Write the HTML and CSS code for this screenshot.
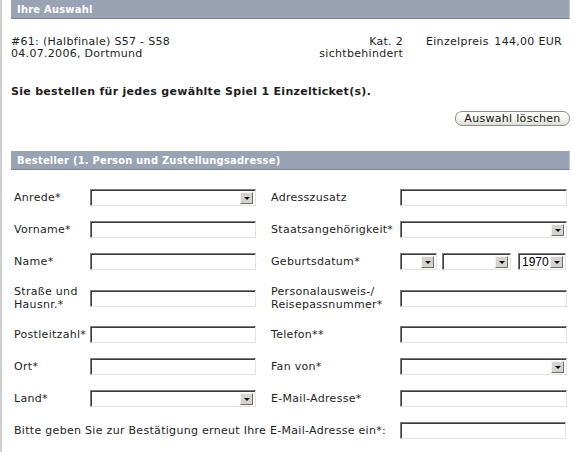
FILE: index.html
```html
<!DOCTYPE html>
<html lang="de">
<head>
<meta charset="utf-8">
<title>Ihre Auswahl</title>
<link rel="stylesheet" href="styles.css">
</head>
<body>
<div class="page">
  <div class="bar">Ihre Auswahl</div>

  <div class="item">
    <div class="match">
      <div>#61: (Halbfinale) S57 - S58</div>
      <div>04.07.2006, Dortmund</div>
    </div>
    <div class="cat">
      <div>Kat. 2</div>
      <div>sichtbehindert</div>
    </div>
    <div class="price">
      <span>Einzelpreis</span>
      <span>144,00 EUR</span>
    </div>
  </div>

  <p class="notice">Sie bestellen für jedes gewählte Spiel 1 Einzelticket(s).</p>

  <div class="actions">
    <button class="btn" type="button">Auswahl löschen</button>
  </div>

  <div class="bar bar-second">Besteller (1. Person und Zustellungsadresse)</div>

  <form class="form">
    <div class="row">
      <label class="lbl">Anrede*</label>
      <div class="select"><span class="value"></span><span class="arrow"></span></div>
      <label class="lbl lbl-right">Adresszusatz</label>
      <input class="field" type="text">
    </div>

    <div class="row">
      <label class="lbl">Vorname*</label>
      <input class="field" type="text">
      <label class="lbl lbl-right">Staatsangehörigkeit*</label>
      <div class="select"><span class="value"></span><span class="arrow"></span></div>
    </div>

    <div class="row">
      <label class="lbl">Name*</label>
      <input class="field" type="text">
      <label class="lbl lbl-right">Geburtsdatum*</label>
      <div class="date">
        <div class="select sel-day"><span class="value"></span><span class="arrow"></span></div>
        <div class="select sel-month"><span class="value"></span><span class="arrow"></span></div>
        <div class="select sel-year"><span class="value">1970</span><span class="arrow"></span></div>
      </div>
    </div>

    <div class="row">
      <label class="lbl">Straße und<br>Hausnr.*</label>
      <input class="field" type="text">
      <label class="lbl lbl-right">Personalausweis-/<br>Reisepassnummer*</label>
      <input class="field" type="text">
    </div>

    <div class="row">
      <label class="lbl">Postleitzahl*</label>
      <input class="field" type="text">
      <label class="lbl lbl-right">Telefon**</label>
      <input class="field" type="text">
    </div>

    <div class="row">
      <label class="lbl">Ort*</label>
      <input class="field" type="text">
      <label class="lbl lbl-right">Fan von*</label>
      <div class="select"><span class="value"></span><span class="arrow"></span></div>
    </div>

    <div class="row">
      <label class="lbl">Land*</label>
      <div class="select"><span class="value"></span><span class="arrow"></span></div>
      <label class="lbl lbl-right">E-Mail-Adresse*</label>
      <input class="field" type="text">
    </div>

    <div class="row row-wide">
      <label class="lbl">Bitte geben Sie zur Bestätigung erneut Ihre E-Mail-Adresse ein*:</label>
      <input class="field" type="text">
    </div>
  </form>
</div>
</body>
</html>
```

FILE: styles.css
```css
html, body {
  margin: 0;
  padding: 0;
  background: #fff;
}

body {
  font-family: "DejaVu Sans", Verdana, sans-serif;
  font-size: 11px;
  letter-spacing: 0.3px;
  color: #1e1e1e;
}

.page {
  border-left: 2px solid #cfcfcf;
  padding-left: 9px;
  width: 559px;
  min-height: 452px;
  box-sizing: content-box;
}

/* section header bars */
.bar {
  height: 19px;
  line-height: 19px;
  background: #99a3b4;
  border-bottom: 1px solid #7b8596;
  border-right: 1px solid #b8c0cc;
  color: #fff;
  font-family: "DejaVu Sans Condensed", "DejaVu Sans", sans-serif;
  font-stretch: condensed;
  font-weight: bold;
  letter-spacing: 0.25px;
  padding-left: 6px;
  box-sizing: border-box;
}

.bar-second {
  margin-top: 25px;
}

/* selected match */
.item {
  display: flex;
  margin-top: 17px;
  line-height: 12px;
}

.match {
  flex: 1;
}

.cat {
  text-align: right;
  width: 120px;
}

.price {
  display: flex;
  justify-content: space-between;
  width: 136px;
  margin-left: 23px;
  padding-right: 8px;
}

.notice {
  margin: 25px 0 0;
  font-weight: bold;
  line-height: 13px;
}

.actions {
  display: flex;
  justify-content: flex-end;
  margin-top: 13px;
}

.btn {
  font-family: "DejaVu Sans", Verdana, sans-serif;
  font-size: 11px;
  letter-spacing: 0.3px;
  color: #111;
  height: 15px;
  width: 115px;
  padding: 0;
  line-height: 13px;
  border: 1px solid #8e8e8e;
  border-radius: 7px;
  background: linear-gradient(#ffffff, #f1f1ee 60%, #dcdcd6);
}

/* order form */
.form {
  display: flex;
  flex-direction: column;
  gap: 15px;
  margin-top: 19px;
  padding-left: 3px;
}

.row {
  display: grid;
  grid-template-columns: 76px 166px 15px 129px 167px;
  align-items: center;
}

.row > :nth-child(1) { grid-column: 1; }
.row > :nth-child(2) { grid-column: 2; }
.row > :nth-child(3) { grid-column: 4; }
.row > :nth-child(4) { grid-column: 5; }

.row-wide > :nth-child(1) { grid-column: 1 / 5; }
.row-wide > :nth-child(2) { grid-column: 5; }

.lbl {
  line-height: 13px;
  color: #1e1e1e;
  white-space: nowrap;
}

.field,
.select {
  height: 17px;
  box-sizing: border-box;
  margin: 0;
  border-style: solid;
  border-width: 1px;
  border-color: #7c7c7c #e2e2e2 #e2e2e2 #7c7c7c;
  box-shadow: inset 1px 1px 0 #3c3c3c;
  background: #fff;
  outline: none;
}

.field {
  width: 167px;
  padding: 0 2px;
  font: inherit;
}

.row > :nth-child(2).field,
.row > :nth-child(2).select {
  width: 166px;
}

.select {
  display: flex;
  align-items: stretch;
  padding: 2px 2px 1px 2px;
  width: 167px;
}

.select .value {
  flex: 1;
  line-height: 12px;
  font-size: 11px;
  padding-left: 1px;
  overflow: hidden;
}

.select .arrow {
  width: 13px;
  flex: none;
  background: #d6d3ce;
  border: 1px solid;
  border-color: #f4f4f2 #6c6c6c #6c6c6c #f4f4f2;
  box-sizing: border-box;
  display: flex;
  align-items: center;
  justify-content: center;
}

.select .arrow::before {
  content: "";
  width: 0;
  height: 0;
  border-left: 3px solid transparent;
  border-right: 3px solid transparent;
  border-top: 3px solid #111;
  margin-top: 1px;
}

.date {
  display: flex;
  align-items: center;
}

.date .sel-day {
  width: 37px;
}

.date .sel-month {
  width: 69px;
  margin-left: 5px;
}

.date .sel-year {
  width: 48px;
  margin-left: 7px;
}

.sel-year .value {
  font-family: "Liberation Sans", Arial, sans-serif;
  font-size: 12px;
  letter-spacing: 0;
  color: #000;
}
```
